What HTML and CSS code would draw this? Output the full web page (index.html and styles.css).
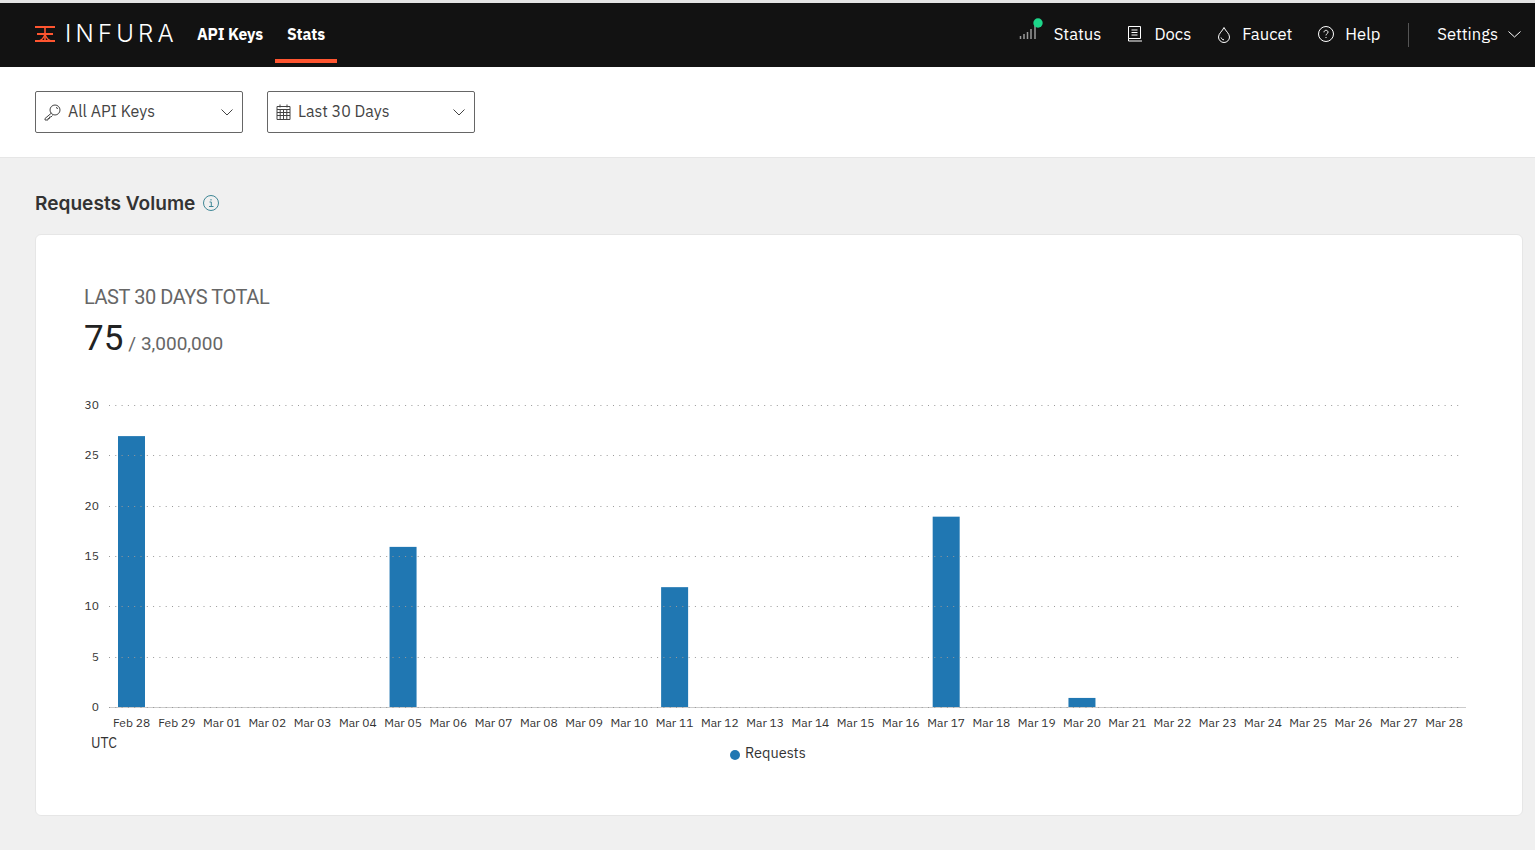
FILE: index.html
```html
<!DOCTYPE html>
<html lang="en">
<head>
<meta charset="UTF-8">
<title>Infura Stats</title>
<link rel="stylesheet" href="styles.css">
</head>
<body>

<header class="topbar">
  <div class="brand">
    <svg class="brand-mark" width="20" height="18" viewBox="0 0 20 18" fill="none" stroke="#ff5530" stroke-width="2">
      <path d="M0 2h20M2 9h16M0 16h20"/>
      <path d="M10 2v14" stroke-width="1.600"/>
      <path d="M3 16c3 0 6-3 7-7c1 4 4 7 7 7" stroke-width="1.200"/>
    </svg>
    <span class="brand-name">INFURA</span>
  </div>
  <nav class="main-nav">
    <a class="main-link">API Keys</a>
    <a class="main-link active">Stats</a>
  </nav>
  <nav class="side-nav">
    <a class="side-link">
      <svg class="status-icon" width="24" height="26" viewBox="0 0 24 26" fill="none">
        <path d="M1.500 21v-3M5 21v-5M8.500 21v-7M12 21v-10M16 21V7" stroke="#999" stroke-width="1.500"/>
        <circle cx="19" cy="5" r="4.700" fill="#1dd68a"/>
      </svg>
      Status
    </a>
    <a class="side-link">
      <svg width="16" height="16" viewBox="0 0 16 16" fill="none" stroke="#fff" stroke-width="1">
        <path d="M1.500 12.500V.5h12v12zM1.500 12.500v2.500h13.500M4.500 4h6M4.500 6.500h6M4.500 9h6"/>
      </svg>
      Docs
    </a>
    <a class="side-link">
      <svg width="14" height="17" viewBox="0 0 14 17" fill="none" stroke="#fff" stroke-width="1">
        <path d="M7 1.500C5.500 5 1.500 7.500 1.500 11a5.500 5.500 0 0 0 11 0C12.500 7.500 8.500 5 7 1.500zM4 11.500c.5 1.500 1.500 2.200 3 2.300"/>
      </svg>
      Faucet
    </a>
    <a class="side-link help-link">
      <svg width="16" height="16" viewBox="0 0 16 16" fill="none" stroke="#fff" stroke-width="1">
        <circle cx="8" cy="8" r="7.500"/>
        <path d="M6 6.300c0-1.300 1-2 2-2s2 .7 2 1.900c0 1.500-2 1.500-2 3.200M8 11v1"/>
      </svg>
      Help
    </a>
    <span class="nav-divider"></span>
    <a class="side-link settings-link">
      Settings
      <svg width="13" height="7" viewBox="0 0 13 7" fill="none" stroke="#fff" stroke-width="1"><path d="M.5.500L6.500 6l6-5.500"/></svg>
    </a>
  </nav>
</header>

<section class="filters">
  <div class="select">
    <svg width="17" height="17" viewBox="0 0 17 17" fill="none" stroke="#444" stroke-width="1">
      <circle cx="11" cy="6" r="5"/>
      <path d="M7.500 9L1 14.500V16h3v-1.500h1.500V13H7l1.500-1.500"/>
      <path d="M12 3.500a1.500 1.500 0 0 1 1.500 1.500"/>
    </svg>
    <span class="select-label">All API Keys</span>
    <svg class="chevron" width="12" height="7" viewBox="0 0 12 7" fill="none" stroke="#444" stroke-width="1"><path d="M.5.500L6 6l5.500-5.500"/></svg>
  </div>
  <div class="select">
    <svg width="15" height="16" viewBox="0 0 15 16" fill="none" stroke="#444" stroke-width="1">
      <path d="M1 2.500h13v13H1zM1 5.500h13M1 8.500h13M1 11.500h13M4.200 5.500v10M7.500 5.500v10M10.800 5.500v10M4 .500v3M11 .500v3"/>
    </svg>
    <span class="select-label">Last 30 Days</span>
    <svg class="chevron" width="12" height="7" viewBox="0 0 12 7" fill="none" stroke="#444" stroke-width="1"><path d="M.5.500L6 6l5.500-5.500"/></svg>
  </div>
</section>

<main class="content">
  <div class="section-head">
    <h2>Requests Volume</h2>
    <svg width="16" height="16" viewBox="0 0 16 16" fill="none" stroke="#3f8796" stroke-width="1">
      <circle cx="8" cy="8" r="7.500"/>
      <path d="M6.500 7h1.800v4.500M6 11.500h4.500M8 4v1.500"/>
    </svg>
  </div>

  <div class="card">
    <div class="total-label">LAST 30 DAYS TOTAL</div>
    <div class="total-row">
      <span class="total-num">75</span>
      <span class="total-max">/ 3,000,000</span>
    </div>
    <!-- viewBox uses the same x/y as the page so positions are easy to read off -->
    <svg class="chart" id="chart" width="1485" height="390" viewBox="36 390 1485 390"></svg>
  </div>
</main>

<script>
const days = ["Feb 28", "Feb 29"];
for (let d = 1; d <= 28; d++) days.push("Mar " + String(d).padStart(2, "0"));

const values = {0: 27, 6: 16, 12: 12, 18: 19, 21: 1};
const left = 109, right = 1463, base = 708, unit = 10.07, step = 45.26, first = 131.5;

let out = "";

for (let i in values) {
  const h = values[i] * unit;
  const x = first + i * step - 13.5;
  out += `<rect x="${x}" y="${base - h}" width="27" height="${h}" fill="#2077b2"/>`;
}

for (let v = 0; v <= 30; v += 5) {
  const y = Math.round(base - v * unit) - 0.5;
  out += `<line class="axis-line" x1="${left}" x2="${v ? left : 1466}" y1="${y}" y2="${y}"/>`;
  out += `<line class="grid" x1="${left}" x2="${right}" y1="${y}" y2="${y}"/>`;
  out += `<text class="tick" x="99" y="${y + 3.500}" text-anchor="end">${v}</text>`;
}

days.forEach((d, i) => {
  out += `<text class="tick" x="${first + i * step}" y="727" text-anchor="middle">${d}</text>`;
});

out += `<text class="utc" x="91" y="748">UTC</text>`;
out += `<circle cx="735" cy="755" r="5" fill="#2077b2"/>`;
out += `<text class="legend" x="745" y="758">Requests</text>`;

document.getElementById("chart").innerHTML = out;
</script>

</body>
</html>
```

FILE: styles.css
```css
body { margin:0; background:#f0f0f0; color:#222; font-family:"IBM Plex Sans", "Noto Sans", sans-serif; overflow:hidden; }

.topbar { display:flex; align-items:center; height:64px; background:#121212; border-top:3px solid #e4e4e4; padding:0 0 0 35px; color:#fff; }
.brand { display:flex; align-items:center; gap:10px; margin-top:-3px; }
.brand-mark { display:block; }
.brand-name { font-family:"Inter", sans-serif; font-weight:300; font-size:24px; letter-spacing:4.200px; line-height:1; }

.main-nav { display:flex; margin-left:7px; height:100%; }
.main-link { display:flex; align-items:center; box-sizing:border-box; padding:6px 12px 0; font-size:15.700px; font-weight:700; letter-spacing:-.1px; border-bottom:4px solid transparent; height:60px; }
.main-link.active { border-bottom-color:#ff5530; }

.side-nav { display:flex; align-items:center; margin-left:auto; margin-top:-2px; }
.side-link { display:flex; align-items:center; gap:11px; font-size:16.600px; margin-right:26px; }
.help-link { margin-right:25px; }
.status-icon { margin-top:-6px; }
.nav-divider { width:1px; height:24px; background:#555; margin:2px 28px 0 3px; }
.settings-link { margin-right:14px; gap:10px; }

.filters { display:flex; gap:24px; height:90px; align-items:center; background:#fff; border-bottom:1px solid #e6e6e6; padding:0 35px; box-sizing:content-box; }
.select { display:flex; align-items:center; gap:7px; width:208px; height:42px; box-sizing:border-box; border:1px solid #666; border-radius:2px; padding:0 9px 0 8px; background:#fff; }
.select-label { font-size:16px; color:#444; flex:1; margin-top:-2px; }
.chevron { flex:none; }

.content { padding:0 12px 0 35px; }
.section-head { display:flex; align-items:center; gap:8px; height:76px; padding-top:14px; box-sizing:border-box; }
h2 { margin:0; font-family:"Inter", sans-serif; font-size:19.100px; font-weight:600; color:#333; }

.card { height:582px; box-sizing:border-box; background:#fff; border:1px solid #e6e6e6; border-radius:6px; padding:50px 0 0 48px; }
.total-label { font-family:"Roboto", sans-serif; font-size:20px; letter-spacing:-.45px; line-height:24px; color:#666; }
.total-row { display:flex; align-items:baseline; gap:5px; margin-top:8px; line-height:44px; }
.total-num { font-family:"Roboto", sans-serif; font-size:35px; color:#222; }
.total-max { font-family:"Roboto", sans-serif; font-size:19px; color:#666; }

.chart { display:block; margin:24px 0 0 -48px; }
.grid { stroke:#999; stroke-width:1; stroke-dasharray:1 5.300; }
.axis-line { stroke:#ccc; stroke-width:1; }
.tick { font-size:12px; fill:#333; }
.utc { font-size:14px; fill:#333; }
.legend { font-size:14.500px; fill:#333; }
```
